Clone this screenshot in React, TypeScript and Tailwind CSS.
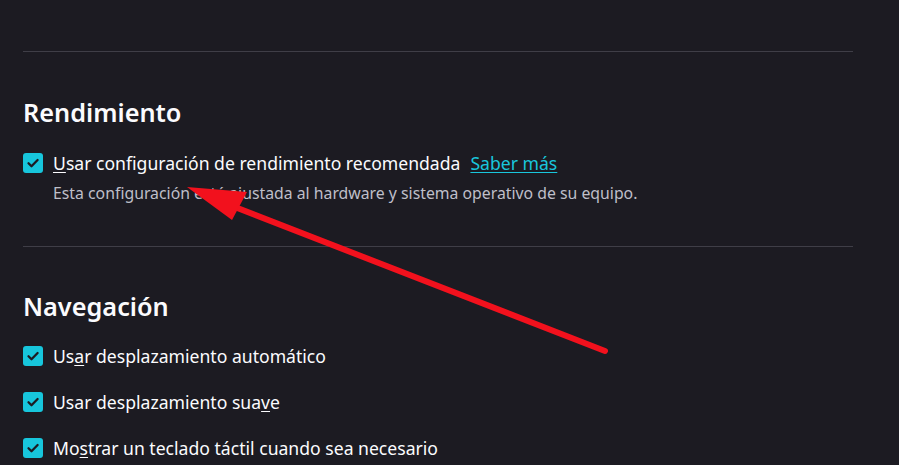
import React from "react";

const font = { fontFamily: '"Noto Sans", "Open Sans", sans-serif' };

function Check() {
  return (
    <span className="flex h-5 w-5 shrink-0 items-center justify-center rounded-[3px] bg-[#17c6dc]">
      <svg width="16" height="16" viewBox="0 0 16 16" fill="none">
        <path d="M3.5 8.3l3 3L12.6 5" stroke="#1c1b22" strokeWidth="2.3" strokeLinecap="round" strokeLinejoin="round" />
      </svg>
    </span>
  );
}

function Item({ children }: { children: React.ReactNode }) {
  return (
    <div className="flex h-6 items-center gap-[10px] text-[17.6px] leading-6 text-[#fbfbfe]">
      <Check />
      <span className="whitespace-nowrap">{children}</span>
    </div>
  );
}

export default function App() {
  return (
    <div className="relative h-[465px] w-[899px] overflow-hidden bg-[#1c1b22]" style={font}>
      <div className="ml-[23px] w-[830px] pt-[51px]">
        <div className="border-t border-[#3f3e47]" />

        {/* Rendimiento */}
        <h2 className="mt-[45px] text-[25.3px] font-semibold leading-[30px] text-[#fbfbfe]">Rendimiento</h2>
        <div className="mt-[24px]">
          <Item>
            <u className="underline-offset-2">U</u>sar configuración de rendimiento recomendada
            <a className="ml-[10px] text-[#19c6dc] underline underline-offset-2">Saber más</a>
          </Item>
          <p className="mt-[7px] pl-[30px] text-[15.8px] leading-[22px] text-[#bfbfc9] whitespace-nowrap">
            Esta configuración está ajustada al hardware y sistema operativo de su equipo.
          </p>
        </div>

        <div className="mt-[42px] border-t border-[#3f3e47]" />

        {/* Navegación */}
        <h2 className="mt-[44px] text-[25.3px] font-semibold leading-[30px] text-[#fbfbfe]">Navegación</h2>
        <div className="mt-[23px] flex flex-col gap-[22px]">
          <Item>
            Us<u className="underline-offset-2">a</u>r desplazamiento automático
          </Item>
          <Item>
            Usar desplazamiento sua<u className="underline-offset-2">v</u>e
          </Item>
          <Item>
            Mo<u className="underline-offset-2">s</u>trar un teclado táctil cuando sea necesario
          </Item>
        </div>
      </div>

      {/* annotation arrow */}
      <svg className="absolute left-0 top-0" width="899" height="465" viewBox="0 0 899 465">
        <line x1="605" y1="351" x2="222" y2="202" stroke="#f2111d" strokeWidth="6" strokeLinecap="round" />
        <polygon points="187,187 247,192 232,220" fill="#f2111d" />
      </svg>
    </div>
  );
}
